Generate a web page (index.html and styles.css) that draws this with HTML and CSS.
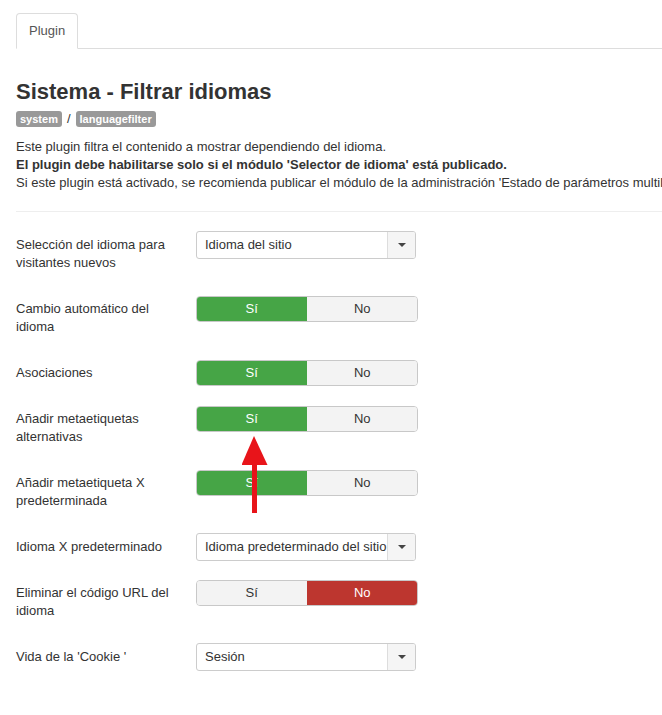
FILE: index.html
```html
<!DOCTYPE html>
<html lang="es">
<head>
<meta charset="utf-8">
<link rel="stylesheet" href="styles.css">
</head>
<body>
<div class="page">
  <ul class="tabs">
    <li class="tab active">Plugin</li>
  </ul>

  <h1 class="title">Sistema - Filtrar idiomas</h1>
  <div class="badges">
    <span class="badge">system</span>
    <span class="sep">/</span>
    <span class="badge">languagefilter</span>
  </div>

  <div class="desc">
    <p>Este plugin filtra el contenido a mostrar dependiendo del idioma.</p>
    <p><strong>El plugin debe habilitarse solo si el módulo 'Selector de idioma' está publicado.</strong></p>
    <p>Si este plugin está activado, se recomienda publicar el módulo de la administración 'Estado de parámetros multilingües'.</p>
  </div>

  <hr class="rule">

  <div class="form">
    <div class="group">
      <div class="label">Selección del idioma para visitantes nuevos</div>
      <div class="select"><span class="select-text">Idioma del sitio</span><span class="select-btn"><span class="caret"></span></span></div>
    </div>

    <div class="group">
      <div class="label">Cambio automático del idioma</div>
      <div class="toggle"><span class="opt yes on">Sí</span><span class="opt">No</span></div>
    </div>

    <div class="group">
      <div class="label">Asociaciones</div>
      <div class="toggle"><span class="opt yes on">Sí</span><span class="opt">No</span></div>
    </div>

    <div class="group">
      <div class="label">Añadir metaetiquetas alternativas</div>
      <div class="toggle"><span class="opt yes on">Sí</span><span class="opt">No</span></div>
    </div>

    <div class="group">
      <div class="label">Añadir metaetiqueta X predeterminada</div>
      <div class="toggle"><span class="opt yes on">Sí</span><span class="opt">No</span></div>
    </div>

    <div class="group">
      <div class="label">Idioma X predeterminado</div>
      <div class="select"><span class="select-text">Idioma predeterminado del sitio</span><span class="select-btn"><span class="caret"></span></span></div>
    </div>

    <div class="group">
      <div class="label">Eliminar el código URL del idioma</div>
      <div class="toggle"><span class="opt">Sí</span><span class="opt no on">No</span></div>
    </div>

    <div class="group">
      <div class="label">Vida de la 'Cookie '</div>
      <div class="select"><span class="select-text">Sesión</span><span class="select-btn"><span class="caret"></span></span></div>
    </div>
  </div>

  <svg class="arrow" width="30" height="80" viewBox="0 0 30 80">
    <polygon points="12,0 25.5,29 -0.5,29" fill="#e8141a"/>
    <rect x="10" y="26" width="5" height="51" fill="#e8141a"/>
  </svg>
</div>
</body>
</html>
```
FILE: styles.css
```css
* { box-sizing: border-box; }
html, body {
  margin: 0;
  padding: 0;
  background: #fff;
  overflow: hidden;
}
body {
  font-family: "Liberation Sans", Arial, sans-serif;
  font-size: 13px;
  line-height: 18px;
  color: #333;
}
.page {
  position: relative;
  padding: 13px 0 0 16px;
  width: 662px;
}
.tabs {
  list-style: none;
  margin: 0;
  padding: 0;
  display: flex;
  border-bottom: 1px solid #ddd;
}
.tab {
  padding: 8px 12px;
  border: 1px solid #ddd;
  border-bottom-color: transparent;
  border-radius: 4px 4px 0 0;
  margin-bottom: -1px;
  background: #fff;
  color: #555;
}
.title {
  font-size: 22px;
  line-height: 26px;
  font-weight: bold;
  margin: 30px 0 5px;
  color: #333;
}
.badges {
  display: flex;
  align-items: center;
  gap: 5px;
  height: 18px;
}
.badge {
  background: #999;
  color: #fff;
  font-size: 11px;
  font-weight: bold;
  line-height: 14px;
  padding: 1px 4px 1px;
  border-radius: 3px;
}
.sep {
  font-size: 13px;
  color: #333;
}
.desc {
  margin-top: 10px;
  white-space: nowrap;
  overflow: hidden;
}
.desc p { margin: 0; }
.rule {
  border: 0;
  border-top: 1px solid #eee;
  border-bottom: 1px solid #fff;
  margin: 19px 0 18px;
}
.group {
  display: flex;
  align-items: flex-start;
  margin-bottom: 18px;
}
.label {
  width: 180px;
  padding: 5px 20px 5px 0;
  flex: none;
}
.select {
  width: 220px;
  height: 28px;
  border: 1px solid #ccc;
  border-radius: 3px;
  display: flex;
  background: #fff;
  overflow: hidden;
}
.select-text {
  flex: 1;
  padding: 4px 0 0 8px;
  white-space: nowrap;
  overflow: hidden;
}
.select-btn {
  width: 28px;
  flex: none;
  background: #f5f5f5;
  border-left: 1px solid #ddd;
  display: flex;
  align-items: center;
  justify-content: center;
}
.caret {
  width: 0;
  height: 0;
  border-left: 4px solid transparent;
  border-right: 4px solid transparent;
  border-top: 4px solid #444;
}
.toggle {
  width: 222px;
  height: 26px;
  display: flex;
  border: 1px solid #c8c8c8;
  border-radius: 4px;
  overflow: hidden;
  margin-top: 1px;
}
.opt {
  flex: 1;
  text-align: center;
  line-height: 24px;
  background: #f3f3f3;
  color: #333;
}
.opt + .opt { border-left: 1px solid #ccc; }
.opt.yes.on { background: #46a546; color: #fff; }
.opt.no.on { background: #bd362f; color: #fff; }
.toggle .opt.on + .opt, .toggle .opt + .opt.on { border-left-color: transparent; }
.arrow {
  position: absolute;
  left: 242px;
  top: 436px;
}
```
